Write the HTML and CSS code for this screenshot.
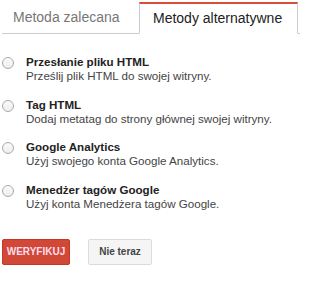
FILE: index.html
```html
<!DOCTYPE html>
<html lang="pl">
<head>
<meta charset="utf-8">
<link rel="stylesheet" href="styles.css">
</head>
<body>
<div class="tabs">
  <div class="tab">Metoda zalecana</div>
  <div class="tab active">Metody alternatywne</div>
  <div class="tab-rest"></div>
</div>
<div class="options">
  <div class="option">
    <span class="radio"></span>
    <div class="text">
      <div class="title">Przesłanie pliku HTML</div>
      <div class="desc">Prześlij plik HTML do swojej witryny.</div>
    </div>
  </div>
  <div class="option">
    <span class="radio"></span>
    <div class="text">
      <div class="title">Tag HTML</div>
      <div class="desc">Dodaj metatag do strony głównej swojej witryny.</div>
    </div>
  </div>
  <div class="option">
    <span class="radio"></span>
    <div class="text">
      <div class="title">Google Analytics</div>
      <div class="desc">Użyj swojego konta Google Analytics.</div>
    </div>
  </div>
  <div class="option">
    <span class="radio"></span>
    <div class="text">
      <div class="title">Menedżer tagów Google</div>
      <div class="desc">Użyj konta Menedżera tagów Google.</div>
    </div>
  </div>
</div>
<div class="buttons">
  <button class="btn primary">WERYFIKUJ</button>
  <button class="btn secondary">Nie teraz</button>
</div>
</body>
</html>
```
FILE: styles.css
```css
html, body {
  margin: 0;
  padding: 0;
  background: #fff;
}
body {
  font-family: "Liberation Sans", Arial, sans-serif;
  color: #222;
  width: 300px;
  height: 286px;
  overflow: hidden;
}
.tabs {
  display: flex;
  align-items: flex-end;
  padding-left: 2px;
  padding-top: 2px;
}
.tab {
  box-sizing: border-box;
  width: 137px;
  height: 32px;
  line-height: 31px;
  font-size: 14px;
  color: #777;
  padding: 0 0 0 11px;
  border-bottom: 1px solid #ccc;
  white-space: nowrap;
}
.tab.active {
  width: 159px;
  color: #222;
  border: 1px solid #ccc;
  border-top: 2px solid #dd4b39;
  border-bottom: 1px solid #fff;
  line-height: 29px;
  padding: 0 0 0 13px;
}
.tab-rest {
  flex: 1;
  border-bottom: 1px solid #ccc;
}
.options {
  padding-top: 21px;
}
.option {
  display: flex;
  align-items: flex-start;
  margin-bottom: 14.5px;
}
.radio {
  width: 10px;
  height: 10px;
  border: 1px solid #aaa;
  border-radius: 50%;
  margin: 2px 0 0 2px;
  background: linear-gradient(#fafafa, #eee);
  flex: none;
}
.text {
  margin-left: 12px;
}
.title {
  font-size: 11.6px;
  font-weight: bold;
  line-height: 14px;
  color: #222;
}
.desc {
  font-size: 11.6px;
  line-height: 14px;
  color: #444;
}
.buttons {
  display: flex;
  gap: 18px;
  padding-left: 2px;
  margin-top: 28px;
}
.btn {
  font-family: "Liberation Sans", Arial, sans-serif;
  font-weight: bold;
  font-size: 10px;
  height: 26px;
  border-radius: 2px;
  padding: 0;
  margin: 0;
  cursor: default;
}
.primary {
  background: #d14836;
  border: 1px solid #c53727;
  color: #fde;
  width: 68px;
}
.secondary {
  background: #f5f5f5;
  border: 1px solid #dcdcdc;
  color: #444;
  width: 64px;
}
```
